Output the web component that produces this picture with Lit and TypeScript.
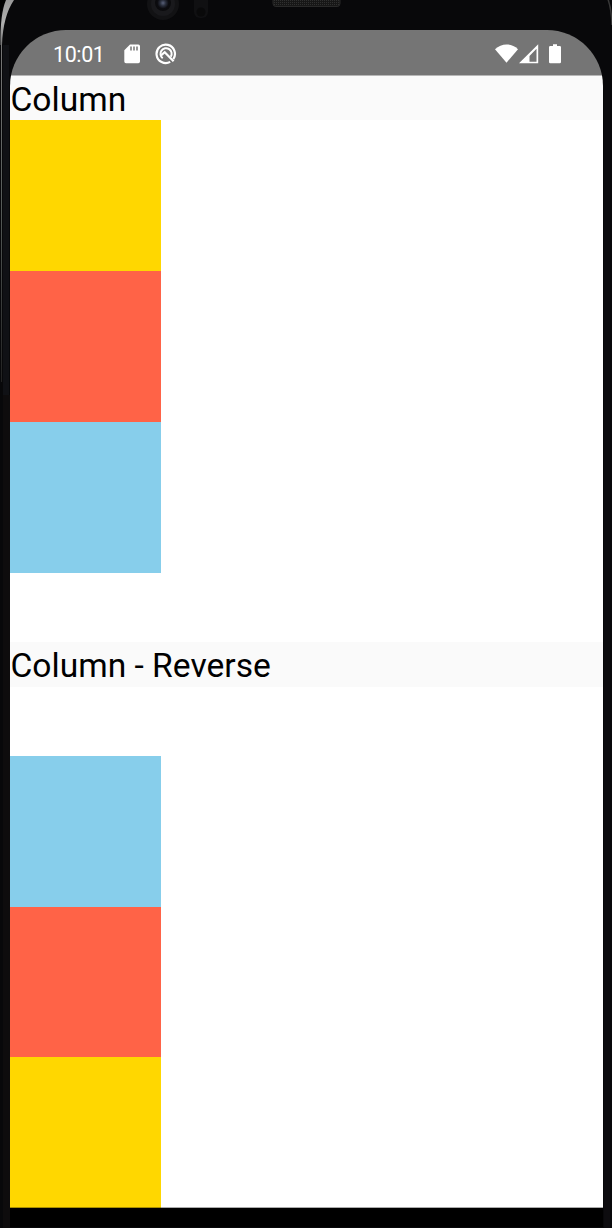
import { LitElement, html, css } from "lit";
import { customElement, property } from "lit/decorators.js";

@customElement("status-bar")
class StatusBar extends LitElement {
  static styles = css`
    :host { display: flex; height: 45px; box-sizing: border-box; padding: 2px 42px 0 43px; align-items: center; background: #757575; color: #fff; }
    .time { font: 400 21.5px/24px Roboto, sans-serif; letter-spacing: -0.4px; width: 72px; padding-top: 2px; white-space: nowrap; }
    .sd { width: 16px; height: 20px; margin-left: -1px; }
    .logo { width: 22px; height: 22px; margin-left: 15px; }
    .grow { flex: 1; }
    .wifi { width: 23px; height: 20px; }
    .signal { width: 20px; height: 20px; margin-left: 1px; }
    .battery { width: 12px; height: 20px; margin-left: 10px; }
    svg { display: block; flex: none; }
  `;
  render() {
    return html`
      <span class="time">10:01</span>
      <svg class="sd" viewBox="0 0 16 20"><path fill="#fff" d="M6 .5h8.3A1.7 1.7 0 0 1 16 2.200v15.300a1.700 1.700 0 0 1-1.700 1.700H2A1.700 1.700 0 0 1 .3 17.500V6.200z"/><path stroke="#757575" stroke-width="1.500" d="M7 2.500v4M10 2.500v4M13 2.500v4"/></svg>
      <svg class="logo" viewBox="0 0 22 22" fill="none" stroke="#fff"><path stroke-width="2.200" d="M18.300 16.100A9.200 9.200 0 1 0 15.200 18.900"/><path stroke-width="2" d="M7.700 15.300A5.600 5.600 0 1 1 15.800 13.800"/><path stroke-width="2.200" d="M6 12.300l3.700-3.100 8.900 9"/></svg>
      <span class="grow"></span>
      <svg class="wifi" viewBox="0 0 23 20"><path fill="#fff" d="M0 5.200C6.500-1.200 16.500-1.200 23 5.200L11.500 18.700z"/></svg>
      <svg class="signal" viewBox="0 0 20 20"><path fill="#fff" fill-rule="evenodd" d="M0 19.200L19.200 .2v19zM10.500 17.800h7V4.700l-7 7.200z"/></svg>
      <svg class="battery" viewBox="0 0 12 20"><path fill="#fff" d="M4 .2h4v1.700h2.700A1.300 1.300 0 0 1 12 3.200v14.700a1.300 1.300 0 0 1-1.300 1.300H1.300A1.300 1.300 0 0 1 0 17.900V3.200a1.300 1.300 0 0 1 1.300-1.300H4z"/></svg>
    `;
  }
}

@customElement("flex-demo")
class FlexDemo extends LitElement {
  @property() heading = "";
  @property({ type: Boolean, reflect: true }) reverse = false;
  static styles = css`
    :host { display: flex; flex-direction: column; flex: 1; min-height: 0; }
    .heading { height: 44px; flex: none; box-sizing: border-box; padding: 4px 0 0 0.5px; background: #fafafa; color: #000; font: 400 33.6px/40px Roboto, sans-serif; white-space: nowrap; }
    .stack { flex: 1; display: flex; flex-direction: column; background: #fff; }
    .box { width: 151px; height: 151px; flex: none; }
    :host([reverse]) .heading { height: 45px; }
    :host([reverse]) .stack { flex-direction: column-reverse; }
    :host([reverse]) .box { height: 150.700px; }
    .gold { background: #ffd700; }
    .tomato { background: #ff6347; }
    .sky { background: #87ceeb; }
  `;
  render() {
    return html`
      <div class="heading">${this.heading}</div>
      <div class="stack">
        <div class="box gold"></div>
        <div class="box tomato"></div>
        <div class="box sky"></div>
      </div>
    `;
  }
}

@customElement("app-root")
class AppRoot extends LitElement {
  static styles = css`
    :host { display: block; position: relative; width: 612px; height: 1228px; box-sizing: border-box; padding: 30px 9px 0 10px; overflow: hidden; background: #08080a; }
    .frame { position: absolute; inset: 0; width: 612px; height: 1228px; }
    .screen { position: relative; display: flex; flex-direction: column; height: 1197px; background: #000; border-radius: 56px 56px 0 0; overflow: hidden; }
    .content { height: 1133px; flex: none; display: flex; flex-direction: column; border-top: 1px solid #b7b7b7; box-sizing: border-box; }
    .edge { position: relative; flex: none; height: 1px; margin-top: -1px; background: rgba(0, 0, 0, 0.33); }
  `;
  render() {
    return html`
      <svg class="frame" viewBox="0 0 612 1228">
        <defs>
          <linearGradient id="rim" x1="0" y1="0" x2="0" y2="1"><stop offset="0" stop-color="#999"/><stop offset=".5" stop-color="#b0b0b0"/><stop offset="1" stop-color="#777"/></linearGradient>
          <linearGradient id="side" x1="0" y1="0" x2="0" y2="1"><stop offset="0" stop-color="#777"/><stop offset=".5" stop-color="#555a58"/><stop offset="1" stop-color="#222"/></linearGradient>
          <radialGradient id="lens"><stop offset="0" stop-color="#59617a"/><stop offset=".35" stop-color="#292e3c"/><stop offset=".7" stop-color="#0c0c10"/><stop offset="1" stop-color="#0a0a0c"/></radialGradient>
          <pattern id="mesh" width="2" height="2" patternUnits="userSpaceOnUse"><rect width="2" height="2" fill="#171717"/><rect width="1" height="1" fill="#303030"/></pattern>
        </defs>
        <path d="M0 0h6Q1 10 0 20z" fill="#000"/>
        <path d="M6 0H14Q3 16 2 45H0.500Q0 14 6 0z" fill="url(#rim)"/>
        <rect x="1" y="42" width="1" height="340" fill="url(#side)"/>
        <path d="M607.500-2Q611.500 8 612 25" fill="none" stroke="#383838" stroke-width="1.500"/>
        <rect x="3" y="45" width="6" height="350" fill="#101115"/>
        <rect x="3" y="395" width="7" height="833" fill="#0e0c0d"/>
        <rect x="604" y="90" width="6" height="1138" fill="#0d0c0f"/>
        <circle cx="163" cy="4" r="16" fill="#121214"/>
        <circle cx="163" cy="4" r="12" fill="#19191c"/>
        <circle cx="163" cy="3" r="8" fill="url(#lens)"/>
        <rect x="194" y="-8" width="14" height="26" rx="6" fill="#101012"/>
        <circle cx="201" cy="12" r="4.500" fill="#09090a"/>
        <rect x="273" y="-5" width="67" height="11.500" rx="3" fill="url(#mesh)" stroke="#292929"/>
      </svg>
      <div class="screen">
        <status-bar></status-bar>
        <div class="content">
          <flex-demo heading="Column"></flex-demo>
          <flex-demo heading="Column - Reverse" reverse></flex-demo>
        </div>
        <div class="edge"></div>
      </div>
    `;
  }
}
